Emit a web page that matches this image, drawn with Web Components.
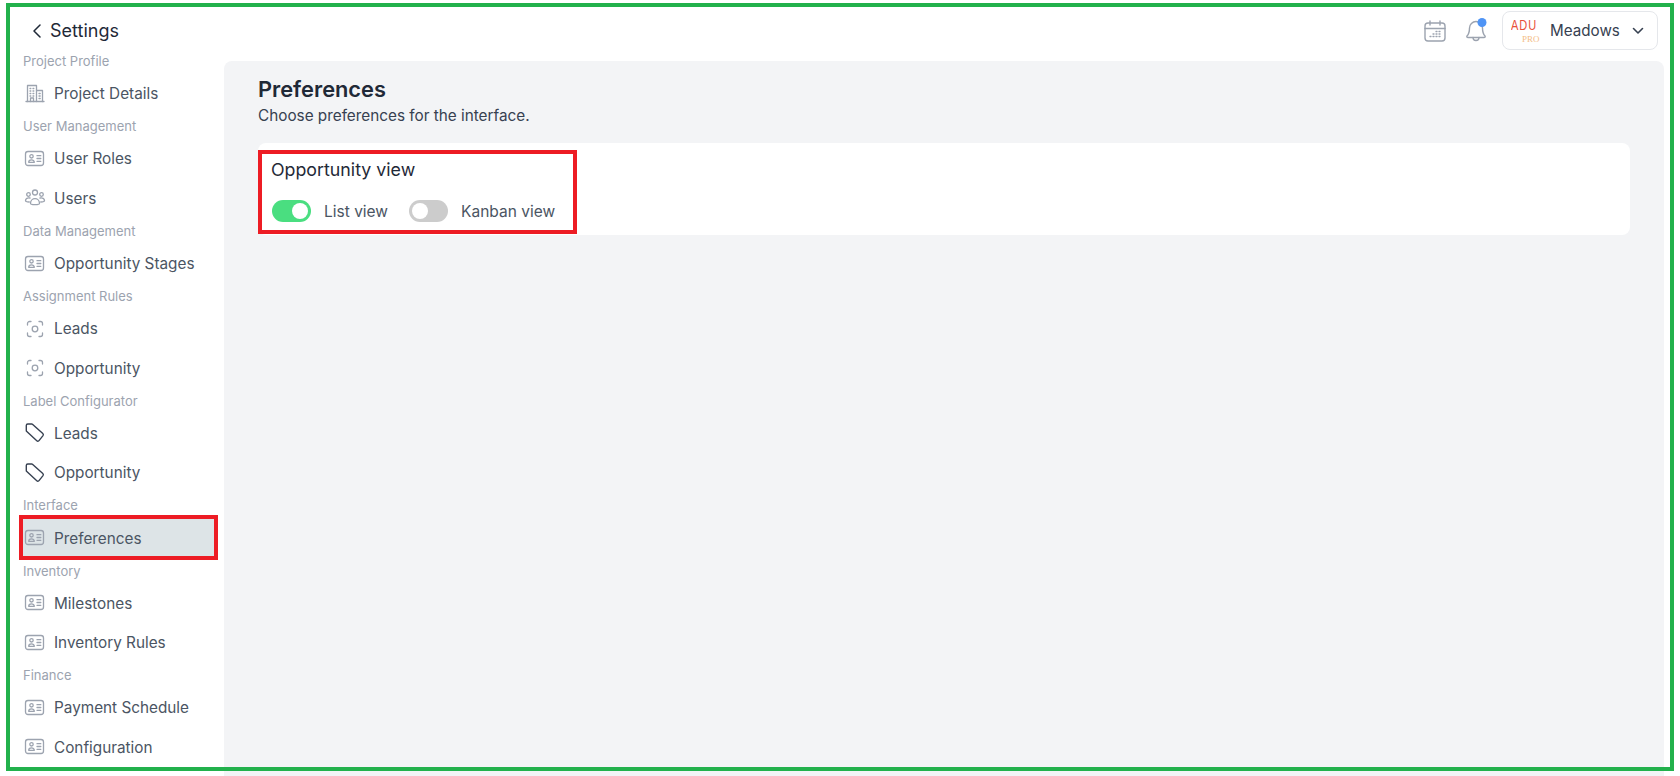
<!DOCTYPE html>
<html>
<head>
<meta charset="utf-8">
<title>Settings</title>
<style>
  html, body { margin: 0; padding: 0; background: #fff; }
  body { font-family: Inter, "Noto Sans", sans-serif; overflow: hidden; }
</style>
</head>
<body>
<app-shell>
  <side-nav slot="side">
    <nav-label>Project Profile</nav-label>
    <nav-item icon="building">Project Details</nav-item>
    <nav-label>User Management</nav-label>
    <nav-item icon="card">User Roles</nav-item>
    <nav-item icon="users">Users</nav-item>
    <nav-label>Data Management</nav-label>
    <nav-item icon="card">Opportunity Stages</nav-item>
    <nav-label>Assignment Rules</nav-label>
    <nav-item icon="focus">Leads</nav-item>
    <nav-item icon="focus">Opportunity</nav-item>
    <nav-label>Label Configurator</nav-label>
    <nav-item icon="tag">Leads</nav-item>
    <nav-item icon="tag">Opportunity</nav-item>
    <nav-label>Interface</nav-label>
    <nav-item icon="card" active>Preferences</nav-item>
    <nav-label>Inventory</nav-label>
    <nav-item icon="card">Milestones</nav-item>
    <nav-item icon="card">Inventory Rules</nav-item>
    <nav-label>Finance</nav-label>
    <nav-item icon="card">Payment Schedule</nav-item>
    <nav-item icon="card">Configuration</nav-item>
  </side-nav>
  <top-bar slot="top"></top-bar>
  <pref-panel slot="main"></pref-panel>
  <mark-box slot="marks" style="left:19px;top:515px;width:199px;height:45px"></mark-box>
  <mark-box slot="marks" style="left:258px;top:150px;width:319px;height:84px"></mark-box>
  <mark-box slot="marks" color="#22b14c" style="left:6px;top:3px;width:1668px;height:768px"></mark-box>
</app-shell>

<script>
// shared stroke icons for the side menu
const ICONS = {
  building: `<path d="M2 18.500h18" /><path d="M3.500 18.500V2.500h9v16" /><path d="M12.500 7.500h6v11" /><path d="M6.500 18.500v-3.500h3v3.500" />
    <path d="M6 5.500h.8M9 5.500h.8M6 8h.8M9 8h.8M6 10.500h.8M9 10.500h.8M6 13h.8M9 13h.8M15 10.500h1.200M15 13h1.200M15 15.500h1.200" />`,
  card: `<rect x="1.500" y="3.500" width="18" height="14" rx="2.500" /><circle cx="7.500" cy="8.300" r="1.700" /><path d="M4.700 14.300c0-3.300 5.600-3.300 5.600 0z" /><path d="M13 7.700h3.800M13 10.500h3.800M13 13.300h3.800" />`,
  users: `<circle cx="11" cy="5.500" r="2.500" /><circle cx="4.500" cy="7.500" r="1.800" /><circle cx="17.500" cy="7.500" r="1.800" />
    <path d="M6.500 16.500c0-6.500 9-6.500 9 0 0 1.500-9 1.500-9 0z" /><path d="M5.300 15c-2.500 0-3.800-.6-3.800-1.500 0-2 2-3 4.500-2.500M16.700 15c2.500 0 3.800-.6 3.800-1.500 0-2-2-3-4.500-2.500" />`,
  focus: `<circle cx="11" cy="11" r="2.800" /><path d="M3.500 7V5.500a2 2 0 0 1 2-2H7M15 3.500h1.500a2 2 0 0 1 2 2V7M18.500 15v1.500a2 2 0 0 1-2 2H15M7 18.500H5.500a2 2 0 0 1-2-2V15" />`,
  tag: `<path d="M2.300 3.500a1.500 1.500 0 0 1 1.500-1.500h3.900a1.500 1.500 0 0 1 1 .4l10.100 9.200a1.500 1.500 0 0 1 .2 2l-4 5a1.500 1.500 0 0 1-2.200.2L2.800 9.500a1.500 1.500 0 0 1-.5-1.100z" />`
};

class AppShell extends HTMLElement {
  constructor() {
    super();
    this.attachShadow({ mode: 'open' }).innerHTML = `
      <style>
        :host { display: block; position: relative; width: 1680px; height: 776px; overflow: hidden; background: #fff; }
        .grid { display: grid; grid-template-columns: 224px 1fr; height: 100%; }
        .right { display: flex; flex-direction: column; min-width: 0; padding-right: 16px; }
        ::slotted([slot=main]) { flex: 1; }
      </style>
      <div class="grid">
        <slot name="side"></slot>
        <div class="right">
          <slot name="top"></slot>
          <slot name="main"></slot>
        </div>
      </div>
      <slot name="marks"></slot>`;
  }
}

class SideNav extends HTMLElement {
  constructor() {
    super();
    this.attachShadow({ mode: 'open' }).innerHTML = `
      <style>
        :host { display: block; }
        .back { height: 48px; padding: 14px 0 0 33px; box-sizing: border-box; display: flex; align-items: center; gap: 9px; color: #1f2937; font-size: 18px; line-height: 20px; }
        svg { width: 8px; height: 14px; fill: none; stroke: #1f2937; stroke-width: 1.500; stroke-linecap: round; stroke-linejoin: round; }
        nav { padding: 0 10px 0 23px; }
      </style>
      <div class="back">
        <svg viewBox="0 0 8 14"><path d="M7 1 1 7l6 6" /></svg>
        <span>Settings</span>
      </div>
      <nav><slot></slot></nav>`;
  }
}

class NavLabel extends HTMLElement {
  constructor() {
    super();
    this.attachShadow({ mode: 'open' }).innerHTML = `
      <style>
        :host { display: flex; align-items: center; height: 26px; font-size: 13px; color: #9ca3af; }
      </style>
      <slot></slot>`;
  }
}

class NavItem extends HTMLElement {
  connectedCallback() {
    if (this.shadowRoot) return;
    const icon = this.getAttribute('icon') || 'card';
    const dark = icon === 'tag';
    this.attachShadow({ mode: 'open' }).innerHTML = `
      <style>
        :host { display: flex; align-items: center; gap: 8px; height: 39.300px; padding-left: 1px; font-size: 15.300px; color: #4b5563; }
        :host([active]) { background: #dde4e7; }
        svg { width: 22px; height: 22px; flex: none; fill: none; stroke: ${dark ? '#374151' : '#9ca3af'}; stroke-width: ${dark ? 1.4 : 1.3}; stroke-linecap: round; stroke-linejoin: round; }
      </style>
      <svg viewBox="0 0 22 22">${ICONS[icon]}</svg>
      <slot></slot>`;
  }
}

class TopBar extends HTMLElement {
  constructor() {
    super();
    this.attachShadow({ mode: 'open' }).innerHTML = `
      <style>
        :host { display: flex; align-items: center; justify-content: flex-end; height: 61px; box-sizing: border-box; padding: 0 6px 0 0; }
        .cal { width: 22px; height: 22px; margin-right: 18px; }
        .bell { width: 24px; height: 26px; margin-right: 14px; margin-top: -2px; }
        svg { fill: none; stroke: #9ca3af; stroke-width: 1.400; stroke-linecap: round; stroke-linejoin: round; }
        .project { display: flex; align-items: center; width: 156px; height: 39px; box-sizing: border-box; border: 1.500px solid #e5e7eb; border-radius: 8px; padding-left: 8px; font-size: 15.200px; color: #374151; }
        .logo { width: 27px; height: 30px; margin-right: 12px; line-height: 1; }
        .adu { display: block; font: 11px/13px "Liberation Sans", sans-serif; letter-spacing: 1px; color: #e8503a; transform: scaleY(1.350); transform-origin: 0 0; white-space: nowrap; }
        .pro { display: block; font: 9px/9px "Liberation Serif", serif; color: #f4bd86; padding-left: 11px; margin-top: 6px; white-space: nowrap; }
        .name { flex: 1; }
        .chev { width: 12px; height: 8px; margin-right: 13px; stroke: #374151; stroke-width: 1.600; }
      </style>
      <svg class="cal" viewBox="0 0 22 22">
        <rect x="1" y="3" width="20" height="18" rx="3" /><path d="M1 8.500h20M6 1v4M16 1v4" />
        <path stroke-width="1.300" d="M6 16.500h1M9 16.500h1M12 16.500h1M15 16.500h1M9 14h1M12 14h1M15 14h1M12 11.500h1M15 11.500h1" />
      </svg>
      <svg class="bell" viewBox="0 0 24 26">
        <path d="M3 19c2-2 2.500-4 2.500-8a6.500 6.500 0 0 1 13 0c0 4 .5 6 2.500 8 .5.700 0 1.500-1 1.500H4c-1 0-1.500-.8-1-1.500z" /><path d="M9 20.500a3 3 0 0 0 6 0" />
        <circle cx="18" cy="5.500" r="4.500" fill="#4f94f5" stroke="none" />
      </svg>
      <div class="project">
        <div class="logo"><span class="adu">ADU</span><span class="pro">PRO</span></div>
        <span class="name">Meadows</span>
        <svg class="chev" viewBox="0 0 12 8"><path d="M1.500 1.500 6 6l4.500-4.500" /></svg>
      </div>`;
  }
}

class ToggleSwitch extends HTMLElement {
  constructor() {
    super();
    this.attachShadow({ mode: 'open' }).innerHTML = `
      <style>
        :host { display: inline-flex; align-items: center; gap: 13px; font-size: 15.500px; color: #4b5563; }
        .track { width: 39px; height: 22px; border-radius: 11px; background: #cccccc; padding: 3px; box-sizing: border-box; display: flex; }
        .knob { width: 16px; height: 16px; border-radius: 50%; background: #fff; }
        :host([on]) .track { background: #4ade80; justify-content: flex-end; }
      </style>
      <span class="track"><span class="knob"></span></span>
      <slot></slot>`;
  }
}

class PrefPanel extends HTMLElement {
  constructor() {
    super();
    this.attachShadow({ mode: 'open' }).innerHTML = `
      <style>
        :host { display: block; background: #f3f4f6; border-radius: 8px 8px 0 0; padding: 14px 34px 0; box-sizing: border-box; }
        h1 { margin: 0; font-size: 21.800px; line-height: 28px; font-weight: 600; color: #1f2937; }
        p { margin: 1px 0 0; font-size: 15.300px; line-height: 24px; color: #374151; }
        .card { margin-top: 15px; height: 92px; box-sizing: border-box; padding: 14px 13px 0; background: #fff; border-radius: 8px; }
        h2 { margin: 0; font-size: 17.800px; line-height: 26px; font-weight: 400; color: #1f2937; }
        .row { display: flex; gap: 21px; margin-top: 17px; padding-left: 1px; }
      </style>
      <h1>Preferences</h1>
      <p>Choose preferences for the interface.</p>
      <div class="card">
        <h2>Opportunity view</h2>
        <div class="row">
          <toggle-switch on>List view</toggle-switch>
          <toggle-switch>Kanban view</toggle-switch>
        </div>
      </div>`;
  }
}

// annotation rectangle drawn over the screenshot
class MarkBox extends HTMLElement {
  connectedCallback() {
    if (this.shadowRoot) return;
    const color = this.getAttribute('color') || '#ed1c24';
    this.attachShadow({ mode: 'open' }).innerHTML = `
      <style>
        :host { position: absolute; display: block; box-sizing: border-box; border: 4px solid ${color}; pointer-events: none; }
      </style>`;
  }
}

customElements.define('nav-label', NavLabel);
customElements.define('nav-item', NavItem);
customElements.define('side-nav', SideNav);
customElements.define('top-bar', TopBar);
customElements.define('toggle-switch', ToggleSwitch);
customElements.define('pref-panel', PrefPanel);
customElements.define('mark-box', MarkBox);
customElements.define('app-shell', AppShell);
</script>
</body>
</html>
